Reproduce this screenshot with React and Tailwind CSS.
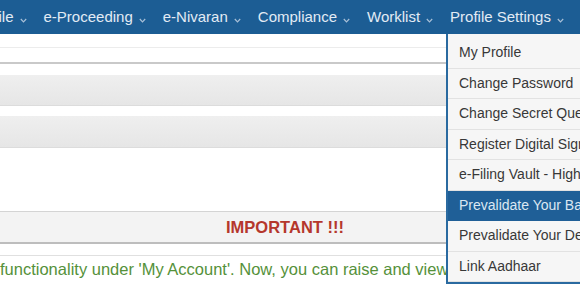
const navItems = ['Profile', 'e-Proceeding', 'e-Nivaran', 'Compliance', 'Worklist', 'Profile Settings']

const menuItems = [
  'My Profile',
  'Change Password',
  'Change Secret Question',
  'Register Digital Signature Certificate',
  'e-Filing Vault - Higher Security',
  'Prevalidate Your Bank Account',
  'Prevalidate Your Demat Account',
  'Link Aadhaar',
]

function Caret() {
  return (
    <svg width="7" height="5" viewBox="0 0 7 5" className="mt-[6px] text-[#a9c0d8]">
      <path d="M0.8 1 L3.5 3.8 L6.2 1" fill="none" stroke="currentColor" strokeWidth="1.2" />
    </svg>
  )
}

export default function App() {
  return (
    <div
      className="relative w-[580px] h-[300px] overflow-hidden bg-white"
      style={{ fontFamily: '"Liberation Sans", Arial, sans-serif' }}
    >
      <nav className="h-[34px] bg-[#1c5d94] flex items-center gap-[17px] -ml-[29px] whitespace-nowrap">
        {navItems.map(item => (
          <div key={item} className="flex items-center gap-[6px] text-[15px] text-[#e2ebf4]">
            <span>{item}</span>
            <Caret />
          </div>
        ))}
      </nav>

      <div className="h-[13px]" />
      <div className="h-px bg-[#ececec]" />
      <div className="h-[14px]" />
      <div className="h-[2px] bg-[#c9c9c9]" />
      <div className="h-[11px]" />
      <div className="h-[31px] bg-gradient-to-b from-[#efefef] to-[#e6e6e6] border-b border-[#dcdcdc]" />
      <div className="h-[10px]" />
      <div className="h-[32px] bg-gradient-to-b from-[#efefef] to-[#e6e6e6] border-b border-[#dcdcdc]" />
      <div className="h-[63px]" />
      <div className="h-[33px] bg-[#f3f3f3] border-t border-[#d4d4d4] border-b-2 border-b-[#bdbdbd] flex items-center justify-center pr-[10px]">
        <span className="text-[16.5px] font-bold text-[#b5372c]">IMPORTANT !!!</span>
      </div>
      <div className="h-[11px]" />
      <div className="h-px bg-[#e0e0e0]" />
      <div className="w-[446px] overflow-hidden pt-[1px] text-[16.5px] text-[#55913a] whitespace-nowrap">
        functionality under 'My Account'. Now, you can raise and view your grievances
      </div>

      <div className="absolute left-[446px] top-[34px] w-[150px] bg-[#f6f6f6] border-l-2 border-b-2 border-[#2a6aa0] pt-[4px]">
        {menuItems.map((item, i) => (
          <div
            key={item}
            className={
              i === 5
                ? 'h-[30.5px] flex items-center pl-[11px] text-[14px] whitespace-nowrap bg-[#1f5f97] text-[#dbe7f2]'
                : 'h-[30.5px] flex items-center pl-[11px] text-[14px] whitespace-nowrap text-[#383838] border-b border-[#e2e2e2]'
            }
          >
            {item}
          </div>
        ))}
      </div>
    </div>
  )
}
